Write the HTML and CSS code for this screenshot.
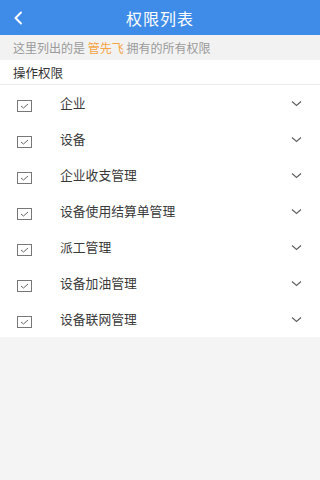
FILE: index.html
```html
<!DOCTYPE html>
<html lang="zh">
<head>
<meta charset="utf-8">
<link rel="stylesheet" href="styles.css">
</head>
<body>
<div class="header">
  <svg class="back" width="10" height="14" viewBox="0 0 10 14"><path d="M8 1.5 L2.5 7 L8 12.5" fill="none" stroke="#fff" stroke-width="2" stroke-linecap="round" stroke-linejoin="round"/></svg>
  <div class="title">权限列表</div>
</div>
<div class="notice">这里列出的是 <span class="name">管先飞</span> 拥有的所有权限</div>
<div class="section">操作权限</div>
<div class="list">
  <div class="row"><span class="box"><svg width="9" height="6" viewBox="0 0 9 6"><path d="M1 3 L3.5 5 L8 1" fill="none" stroke="#666" stroke-width="1"/></svg></span><span class="label">企业</span><svg class="chev" width="11" height="7" viewBox="0 0 11 7"><path d="M1 1.5 L5.5 5.5 L10 1.5" fill="none" stroke="#666" stroke-width="1.3"/></svg></div>
  <div class="row"><span class="box"><svg width="9" height="6" viewBox="0 0 9 6"><path d="M1 3 L3.5 5 L8 1" fill="none" stroke="#666" stroke-width="1"/></svg></span><span class="label">设备</span><svg class="chev" width="11" height="7" viewBox="0 0 11 7"><path d="M1 1.5 L5.5 5.5 L10 1.5" fill="none" stroke="#666" stroke-width="1.3"/></svg></div>
  <div class="row"><span class="box"><svg width="9" height="6" viewBox="0 0 9 6"><path d="M1 3 L3.5 5 L8 1" fill="none" stroke="#666" stroke-width="1"/></svg></span><span class="label">企业收支管理</span><svg class="chev" width="11" height="7" viewBox="0 0 11 7"><path d="M1 1.5 L5.5 5.5 L10 1.5" fill="none" stroke="#666" stroke-width="1.3"/></svg></div>
  <div class="row"><span class="box"><svg width="9" height="6" viewBox="0 0 9 6"><path d="M1 3 L3.5 5 L8 1" fill="none" stroke="#666" stroke-width="1"/></svg></span><span class="label">设备使用结算单管理</span><svg class="chev" width="11" height="7" viewBox="0 0 11 7"><path d="M1 1.5 L5.5 5.5 L10 1.5" fill="none" stroke="#666" stroke-width="1.3"/></svg></div>
  <div class="row"><span class="box"><svg width="9" height="6" viewBox="0 0 9 6"><path d="M1 3 L3.5 5 L8 1" fill="none" stroke="#666" stroke-width="1"/></svg></span><span class="label">派工管理</span><svg class="chev" width="11" height="7" viewBox="0 0 11 7"><path d="M1 1.5 L5.5 5.5 L10 1.5" fill="none" stroke="#666" stroke-width="1.3"/></svg></div>
  <div class="row"><span class="box"><svg width="9" height="6" viewBox="0 0 9 6"><path d="M1 3 L3.5 5 L8 1" fill="none" stroke="#666" stroke-width="1"/></svg></span><span class="label">设备加油管理</span><svg class="chev" width="11" height="7" viewBox="0 0 11 7"><path d="M1 1.5 L5.5 5.5 L10 1.5" fill="none" stroke="#666" stroke-width="1.3"/></svg></div>
  <div class="row"><span class="box"><svg width="9" height="6" viewBox="0 0 9 6"><path d="M1 3 L3.5 5 L8 1" fill="none" stroke="#666" stroke-width="1"/></svg></span><span class="label">设备联网管理</span><svg class="chev" width="11" height="7" viewBox="0 0 11 7"><path d="M1 1.5 L5.5 5.5 L10 1.5" fill="none" stroke="#666" stroke-width="1.3"/></svg></div>
</div>
</body>
</html>
```
FILE: styles.css
```css
html, body {
  margin: 0;
  padding: 0;
  background: #f4f4f4;
  font-family: "Noto Sans CJK SC", "Noto Sans", sans-serif;
  width: 320px;
  height: 480px;
  overflow: hidden;
}
.header {
  height: 35px;
  background: #3e8ce8;
  display: flex;
  align-items: center;
  justify-content: center;
  position: relative;
}
.back {
  position: absolute;
  left: 13px;
  top: 11px;
}
.title {
  color: #fff;
  font-size: 16px;
  letter-spacing: 1px;
}
.notice {
  height: 25px;
  display: flex;
  align-items: center;
  padding-left: 13px;
  font-size: 12px;
  color: #9a9a9a;
  background: #f2f2f2;
  white-space: pre;
}
.name {
  color: #f5a443;
}
.section {
  height: 24px;
  display: flex;
  align-items: center;
  padding-left: 13px;
  font-size: 12.5px;
  color: #333;
  background: #fff;
  border-bottom: 1px solid #ebebeb;
}
.list {
  background: #fff;
}
.row {
  height: 36px;
  display: flex;
  align-items: center;
  padding-left: 17px;
  padding-right: 18px;
}
.box {
  width: 13px;
  height: 10px;
  border: 1px solid #777;
  display: flex;
  align-items: center;
  justify-content: center;
  margin-right: 28px;
  margin-top: 5px;
}
.label {
  flex: 1;
  font-size: 12.8px;
  color: #3a3a3a;
  margin-top: -1px;
}
.chev {
  display: block;
}
```
